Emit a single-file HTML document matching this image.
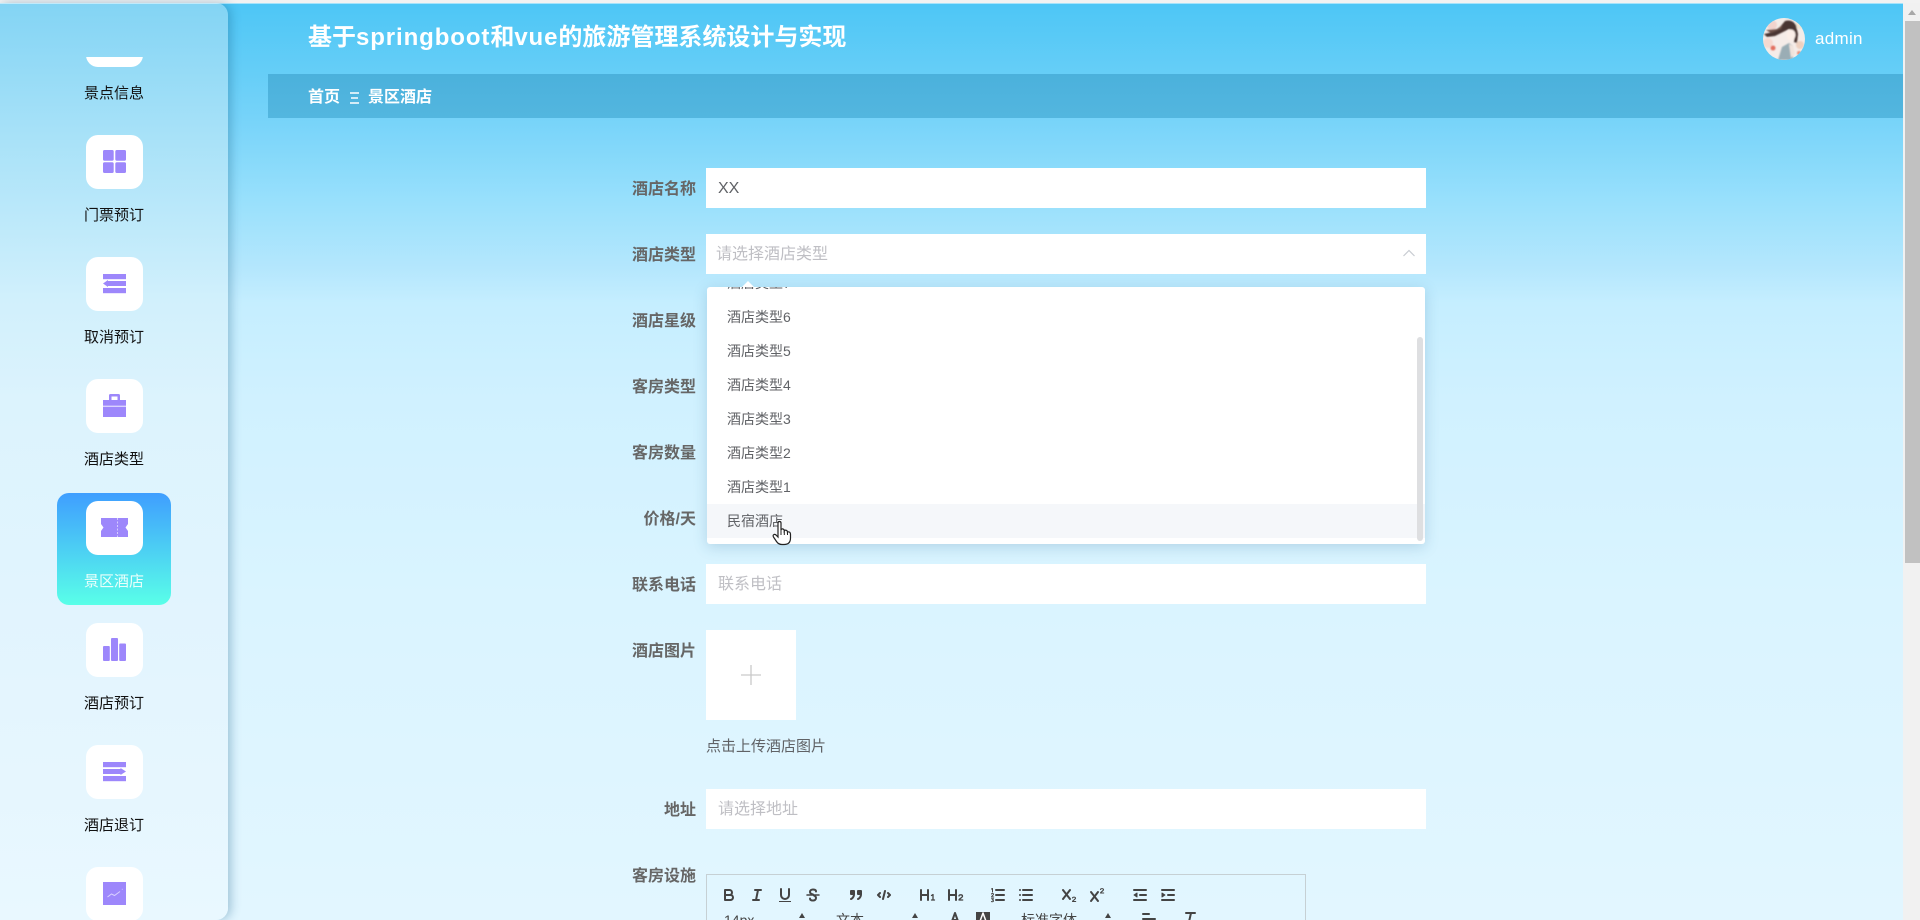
<!DOCTYPE html>
<html lang="zh-CN">
<head>
<meta charset="utf-8">
<title>景区酒店</title>
<style>
html,body{margin:0;padding:0;width:1920px;height:920px;overflow:hidden;background:#f2f2f2}
*{box-sizing:border-box}
body{font-family:"Liberation Sans","Noto Sans CJK SC",sans-serif;position:relative}
.a{position:absolute}
#page{left:0;top:3px;width:1903px;height:917px;overflow:hidden;
background:linear-gradient(180deg,#4dc6f6 0,#66cef7 71px,#76d3f9 115px,#98e0fc 197px,#b5e7fd 267px,#c5eeff 300px,#d0f1ff 397px,#daf4ff 597px,#e2f6ff 917px)}
#side{left:0;top:3px;width:228px;height:917px;border-radius:0 12px 12px 0;
background:linear-gradient(180deg,#83d4f4 0,#a6e1f8 127px,#d1f0fc 297px,#dcf3fd 397px,#e4f5fe 697px,#e9f8ff 917px);
box-shadow:3px 0 10px rgba(20,90,130,.32)}
#strip{left:0;top:3px;width:1903px;height:1px;background:rgba(255,255,255,.5)}
.box{position:absolute;left:86px;width:57px;height:54px;background:#fff;border-radius:12px}
.box svg{position:absolute;left:14px;top:12px;width:29px;height:29px;fill:#9d87fb}
.nl{position:absolute;left:57px;width:114px;text-align:center;font-size:15px;line-height:22px;color:#111}
#act{left:57px;top:493px;width:114px;height:112px;border-radius:12px;background:linear-gradient(180deg,#3f9eff 0,#59ffe8 100%)}
#title{left:308px;top:21px;font-size:24px;line-height:34px;font-weight:700;color:#fff;white-space:nowrap}
#title span{letter-spacing:.9px}
#bc{left:268px;top:74px;width:1635px;height:44px;background:linear-gradient(180deg,#4bb1dc,#53b6df)}
.bct{position:absolute;top:87px;font-size:16px;line-height:22px;font-weight:700;color:#fff;white-space:nowrap}
#admin{left:1815px;top:28px;font-size:17px;line-height:22px;color:#fff;letter-spacing:.3px}
.lb{position:absolute;left:576px;width:120px;text-align:right;font-size:16px;line-height:22px;font-weight:700;color:#666;white-space:nowrap}
.in{position:absolute;left:706px;width:720px;height:40px;background:#fff;font-size:16px;line-height:42px;padding-left:12px;color:#bfbfc4;white-space:nowrap}
#dd{left:707px;top:287px;width:718px;height:257px;background:#fff;border-radius:3px;box-shadow:0 3px 14px rgba(40,100,140,.22);overflow:hidden}
.op{position:absolute;left:0;width:718px;height:34px;padding-left:20px;font-size:14px;line-height:34px;color:#606266;white-space:nowrap}
#arrow{left:742px;top:281px;width:0;height:0;border-left:6px solid transparent;border-right:6px solid transparent;border-bottom:6px solid #fff}
#ths{left:710px;top:50px;width:6px;height:204px;border-radius:3px;background:#dedfe1}
#up{left:706px;top:630px;width:90px;height:90px;background:#fff}
#hint{left:706px;top:736px;font-size:15px;line-height:22px;color:#606266;white-space:nowrap}
#ed{left:706px;top:874px;width:600px;height:60px;border:1px solid #c6d0d4}
.q{position:absolute;top:886px;width:18px;height:18px;fill:none;stroke:#444;stroke-width:2;stroke-linecap:round;stroke-linejoin:round}
.q2{position:absolute;top:910px;width:18px;height:18px;fill:none;stroke:#444;stroke-width:2;stroke-linecap:round;stroke-linejoin:round}
.qt{position:absolute;top:910px;font-size:14px;line-height:20px;color:#444;white-space:nowrap}
.tri{position:absolute;top:913px;width:0;height:0;border-left:3.5px solid transparent;border-right:3.5px solid transparent;border-bottom:5px solid #444}
#sb{left:1903px;top:3px;width:17px;height:917px;background:#f1f1f1}
#thumb{left:1905px;top:21px;width:15px;height:542px;background:#c1c1c1}
#sbup{left:1908px;top:10px;width:0;height:0;border-left:4px solid transparent;border-right:4px solid transparent;border-bottom:5px solid #a8a8a8}
</style>
</head>
<body>
<div class="a" id="page"></div>

<div class="a" id="bc"></div>
<div class="a" id="title">基于<span>springboot</span>和<span>vue</span>的旅游管理系统设计与实现</div>
<div class="bct" style="left:308px">首页</div>
<div class="bct" style="left:350px;width:9px">
  <svg width="9" height="22" style="display:block"><path d="M0 6h9M1 11h7M0 16h9" stroke="#fff" stroke-width="1.5" fill="none"/></svg>
</div>
<div class="bct" style="left:368px">景区酒店</div>

<svg class="a" style="left:1763px;top:18px" width="42" height="42" viewBox="0 0 42 42">
  <defs><clipPath id="av"><circle cx="21" cy="21" r="21"/></clipPath><filter id="bl"><feGaussianBlur stdDeviation=".7"/></filter></defs>
  <g clip-path="url(#av)">
    <rect width="42" height="42" fill="#f5ece8"/>
    <g filter="url(#bl)">
      <circle cx="9" cy="7" r="5" fill="#f2d3cd"/>
      <circle cx="5" cy="25" r="5" fill="#f6d9d0"/>
      <circle cx="10" cy="30" r="2.500" fill="#e3705f"/>
      <circle cx="37" cy="27" r="4" fill="#eed0bf"/>
      <circle cx="36" cy="7" r="4" fill="#f0e4d3"/>
      <circle cx="36" cy="35" r="2" fill="#e5907e"/>
      <path d="M1 16 L10 14 L17 9 L22 3 Q29 1 33 7 L35 16 L34 25 L31 24 L32 14 L26 11 L20 14 L12 18 L4 19 Z" fill="#4a3632"/>
      <path d="M3 12 L14 11 L20 7 L18 11 L8 15 Z" fill="#6d5148"/>
      <ellipse cx="28" cy="17" rx="4.500" ry="5.500" fill="#fbeee8"/>
      <path d="M15 42 L19 29 L26 25 L30 28 L30 42 Z" fill="#9aadb5"/>
      <path d="M26 26 L30 28 L32 36 L28 40 Z" fill="#f0e3dc"/>
    </g>
  </g>
</svg>
<div class="a" id="admin">admin</div>

<div class="a" id="side"></div>
<div class="a" id="strip"></div>
<div class="a" id="act"></div>

<div class="a" style="left:86px;top:57px;width:57px;height:10px;overflow:hidden"><div style="position:absolute;top:-44px;left:0;width:57px;height:54px;background:#fff;border-radius:12px"></div></div>
<div class="nl" style="top:83px">景点信息</div>

<div class="box" style="top:135px"><svg viewBox="0 0 29 29"><rect x="3" y="3" width="10.7" height="10.7" rx="1.5"/><rect x="15.3" y="3" width="10.7" height="10.7" rx="1.5"/><rect x="3" y="15.3" width="10.7" height="10.7" rx="1.5"/><rect x="15.3" y="15.3" width="10.7" height="10.7" rx="1.5"/></svg></div>
<div class="nl" style="top:205px">门票预订</div>

<div class="box" style="top:257px"><svg viewBox="0 0 29 29"><rect x="3" y="5" width="23" height="5.2"/><rect x="8" y="12" width="18" height="5"/><path d="M3 14.500 L8 11 V18 Z"/><rect x="3" y="19" width="23" height="5.200"/></svg></div>
<div class="nl" style="top:327px">取消预订</div>

<div class="box" style="top:379px"><svg viewBox="0 0 29 29"><path d="M3 9h23v5.800H3zM3 15.600h23V26H3z"/><path d="M9 9V4.500A1.500 1.500 0 0 1 10.500 3h8A1.500 1.500 0 0 1 20 4.500V9h-2.500V5.500h-6V9z"/></svg></div>
<div class="nl" style="top:449px">酒店类型</div>

<div class="box" style="top:501px"><svg viewBox="0 0 29 29" style="overflow:visible"><path d="M1 5h27v6l-2.500 3.500L28 18v6H1v-6l2.500-3.500L1 11z"/><path d="M17.500 5v19" stroke="#e4dcff" stroke-width=".8" stroke-dasharray="2 1.500"/></svg></div>
<div class="nl" style="top:571px;color:#e9fffb">景区酒店</div>

<div class="box" style="top:623px"><svg viewBox="0 0 29 29"><rect x="3" y="11" width="6.800" height="15" rx="1"/><rect x="11" y="3" width="7" height="23" rx="1"/><rect x="19.200" y="8.500" width="6.800" height="17.500" rx="1"/></svg></div>
<div class="nl" style="top:693px">酒店预订</div>

<div class="box" style="top:745px"><svg viewBox="0 0 29 29"><rect x="3" y="5" width="23" height="5.200"/><rect x="3" y="12" width="18" height="5"/><path d="M26 14.500 L20.500 11 V18 Z"/><rect x="3" y="19" width="23" height="5.200"/></svg></div>
<div class="nl" style="top:815px">酒店退订</div>

<div class="box" style="top:867px"><svg viewBox="0 0 29 29"><rect x="3" y="3" width="23" height="23"/><path d="M7.500 18 L11.500 15 L14.500 16.500 L20 12.500 M22 10.500 l.5-.5" stroke="#d9d0ff" stroke-width="1" fill="none"/></svg></div>

<div class="lb" style="top:179px">酒店名称</div>
<div class="in" style="top:168px;color:#606266">XX</div>

<div class="lb" style="top:245px">酒店类型</div>
<div class="in" style="top:234px;padding-left:10px">请选择酒店类型</div>
<svg class="a" style="left:1402px;top:248px" width="14" height="10" viewBox="0 0 14 10"><path d="M1.500 8 L7 2.500 L12.500 8" fill="none" stroke="#c8ccd2" stroke-width="1.200"/></svg>

<div class="lb" style="top:311px">酒店星级</div>
<div class="lb" style="top:377px">客房类型</div>
<div class="lb" style="top:443px">客房数量</div>
<div class="lb" style="top:509px">价格/天</div>

<div class="a" id="dd">
  <div class="op" style="top:-21px">酒店类型7</div>
  <div class="op" style="top:13px">酒店类型6</div>
  <div class="op" style="top:47px">酒店类型5</div>
  <div class="op" style="top:81px">酒店类型4</div>
  <div class="op" style="top:115px">酒店类型3</div>
  <div class="op" style="top:149px">酒店类型2</div>
  <div class="op" style="top:183px">酒店类型1</div>
  <div class="op" style="top:217px;background:#f5f7fa">民宿酒店</div>
  <div class="a" id="ths"></div>
</div>
<div class="a" id="arrow"></div>

<svg class="a" style="left:772px;top:520px" width="20" height="26" viewBox="0 0 20 26">
  <path d="M6 14 V3 Q6 1.500 7.500 1.500 Q9 1.500 9 3 V10 Q9.500 8.500 11 9 Q12.300 9.300 12.300 11 Q13 9.800 14.300 10.300 Q15.500 10.800 15.500 12.300 Q16.300 11.500 17.300 12 Q18.500 12.500 18.500 14.500 V18 Q18.500 24.500 12 24.500 H10 Q6.500 24.500 4.500 21.500 L1.500 17 Q.5 15.300 2 14.500 Q3.500 14 4.500 15.500 L6 17 Z" fill="#fff" stroke="#222" stroke-width="1.200"/>
  <path d="M9 10 V15 M12.300 11 V15 M15.500 12.300 V15" stroke="#222" stroke-width="1" fill="none"/>
</svg>

<div class="lb" style="top:575px">联系电话</div>
<div class="in" style="top:564px">联系电话</div>

<div class="lb" style="top:641px">酒店图片</div>
<div class="a" id="up"></div>
<svg class="a" style="left:741px;top:665px" width="20" height="20"><path d="M10 0V20M0 10H20" stroke="#c9c9c9" stroke-width="1.300"/></svg>
<div class="a" id="hint">点击上传酒店图片</div>

<div class="lb" style="top:800px">地址</div>
<div class="in" style="top:789px">请选择地址</div>

<div class="lb" style="top:866px">客房设施</div>
<div class="a" id="ed"></div>

<svg class="q" style="left:720px" viewBox="0 0 18 18"><path d="M5 4H9.500A2.500 2.500 0 0 1 12 6.500v0A2.500 2.500 0 0 1 9.500 9H5V4Z"/><path d="M5 9h5.500A2.500 2.500 0 0 1 13 11.500v0A2.500 2.500 0 0 1 10.500 14H5V9Z"/></svg>
<svg class="q" style="left:748px" viewBox="0 0 18 18"><path d="M7 4H13M5 14H11M8 14L10 4"/></svg>
<svg class="q" style="left:776px" viewBox="0 0 18 18"><path d="M5 3V9a4 4 0 0 0 4 4h0a4 4 0 0 0 4-4V3"/><rect x="3" y="15" width="12" height="1" fill="#444" stroke="none"/></svg>
<svg class="q" style="left:804px" viewBox="0 0 18 18"><path d="M3 9H15" stroke-width="1.500"/><path d="M12 5.500C12 4 10.500 3.500 9 3.500S6 4.300 6 6 7.500 8 9 8.500M6 12.500C6 14 7.500 14.500 9 14.500S12 13.700 12 12 11 10 10 9.500"/></svg>
<svg class="q" style="left:847px" viewBox="0 0 18 18"><rect x="4" y="5" width="3" height="3" fill="#444"/><rect x="11" y="5" width="3" height="3" fill="#444"/><path d="M7 8c0 4-3 5-3 5M14 8c0 4-3 5-3 5"/></svg>
<svg class="q" style="left:875px" viewBox="0 0 18 18"><path d="M5 7L3 9L5 11M13 7L15 9L13 11M10 5L8 13"/></svg>
<svg class="q" style="left:918px" viewBox="0 0 18 18"><path d="M3 4V14M10 4V14M3 9H10"/><path d="M13.500 9.500L15 8.500V14M13.500 14H16.500" stroke-width="1.300"/></svg>
<svg class="q" style="left:946px" viewBox="0 0 18 18"><path d="M3 4V14M10 4V14M3 9H10"/><path d="M13 10C13 8.500 16.500 8.300 16.500 10.200 16.500 11.500 13 12.800 13 14H16.700" stroke-width="1.300"/></svg>
<svg class="q" style="left:989px" viewBox="0 0 18 18"><path d="M7 4H15M7 9H15M7 14H15"/><path d="M2.500 3L3.500 2.500V6M2.500 8C3 7 4.500 7.300 4.500 8.300 4.500 9.200 2.500 10 2.500 11H4.700M2.500 12.800H4.500L3.500 14C4.800 14 4.800 15.800 3.300 15.800 2.800 15.800 2.500 15.500 2.500 15.500" stroke-width="1"/></svg>
<svg class="q" style="left:1017px" viewBox="0 0 18 18"><path d="M6 4H15M6 9H15M6 14H15M3 4h0M3 9h0M3 14h0"/></svg>
<svg class="q" style="left:1060px" viewBox="0 0 18 18"><path d="M3 4L10 13M10 4L3 13"/><path d="M12.500 12C12.500 10.800 15.500 10.800 15.500 12.300 15.500 13.300 12.500 14.500 12.500 15.500H15.700" stroke-width="1.100"/></svg>
<svg class="q" style="left:1088px" viewBox="0 0 18 18"><path d="M3 6L10 15M10 6L3 15"/><path d="M12.500 3.500C12.500 2.300 15.500 2.300 15.500 3.800 15.500 4.800 12.500 6 12.500 7H15.700" stroke-width="1.100"/></svg>
<svg class="q" style="left:1131px" viewBox="0 0 18 18"><path d="M3 14H15M3 4H15M9 9H15"/><path d="M6 7V11L3 9Z" fill="#444" stroke-width="1"/></svg>
<svg class="q" style="left:1159px" viewBox="0 0 18 18"><path d="M3 14H15M3 4H15M9 9H15"/><path d="M3 7V11L6 9Z" fill="#444" stroke-width="1"/></svg>

<div class="qt" style="left:724px">14px</div>
<div class="tri" style="left:799px"></div>
<div class="qt" style="left:836px">文本</div>
<div class="tri" style="left:912px"></div>
<svg class="q2" style="left:946px" viewBox="0 0 18 18"><path d="M5 14L9 3L13 14M6.500 10H11.500"/></svg>
<svg class="q2" style="left:974px" viewBox="0 0 18 18"><defs><pattern id="ht" width="2" height="2" patternUnits="userSpaceOnUse" patternTransform="rotate(45)"><rect width="1" height="2" fill="#555"/></pattern></defs><rect x="2" y="2" width="14" height="14" fill="url(#ht)" stroke="none"/><path d="M5 14L9 3L13 14" stroke-width="1.500" stroke="#fff"/></svg>
<div class="qt" style="left:1021px">标准字体</div>
<div class="tri" style="left:1105px"></div>
<svg class="q2" style="left:1140px" viewBox="0 0 18 18"><path d="M3 9H15M3 14H13M3 4H9"/></svg>
<svg class="q2" style="left:1181px" viewBox="0 0 18 18"><path d="M5 3H14M10 3L7.500 14"/></svg>

<div class="a" id="sb"></div>
<div class="a" id="sbup"></div>
<div class="a" id="thumb"></div>
</body>
</html>
